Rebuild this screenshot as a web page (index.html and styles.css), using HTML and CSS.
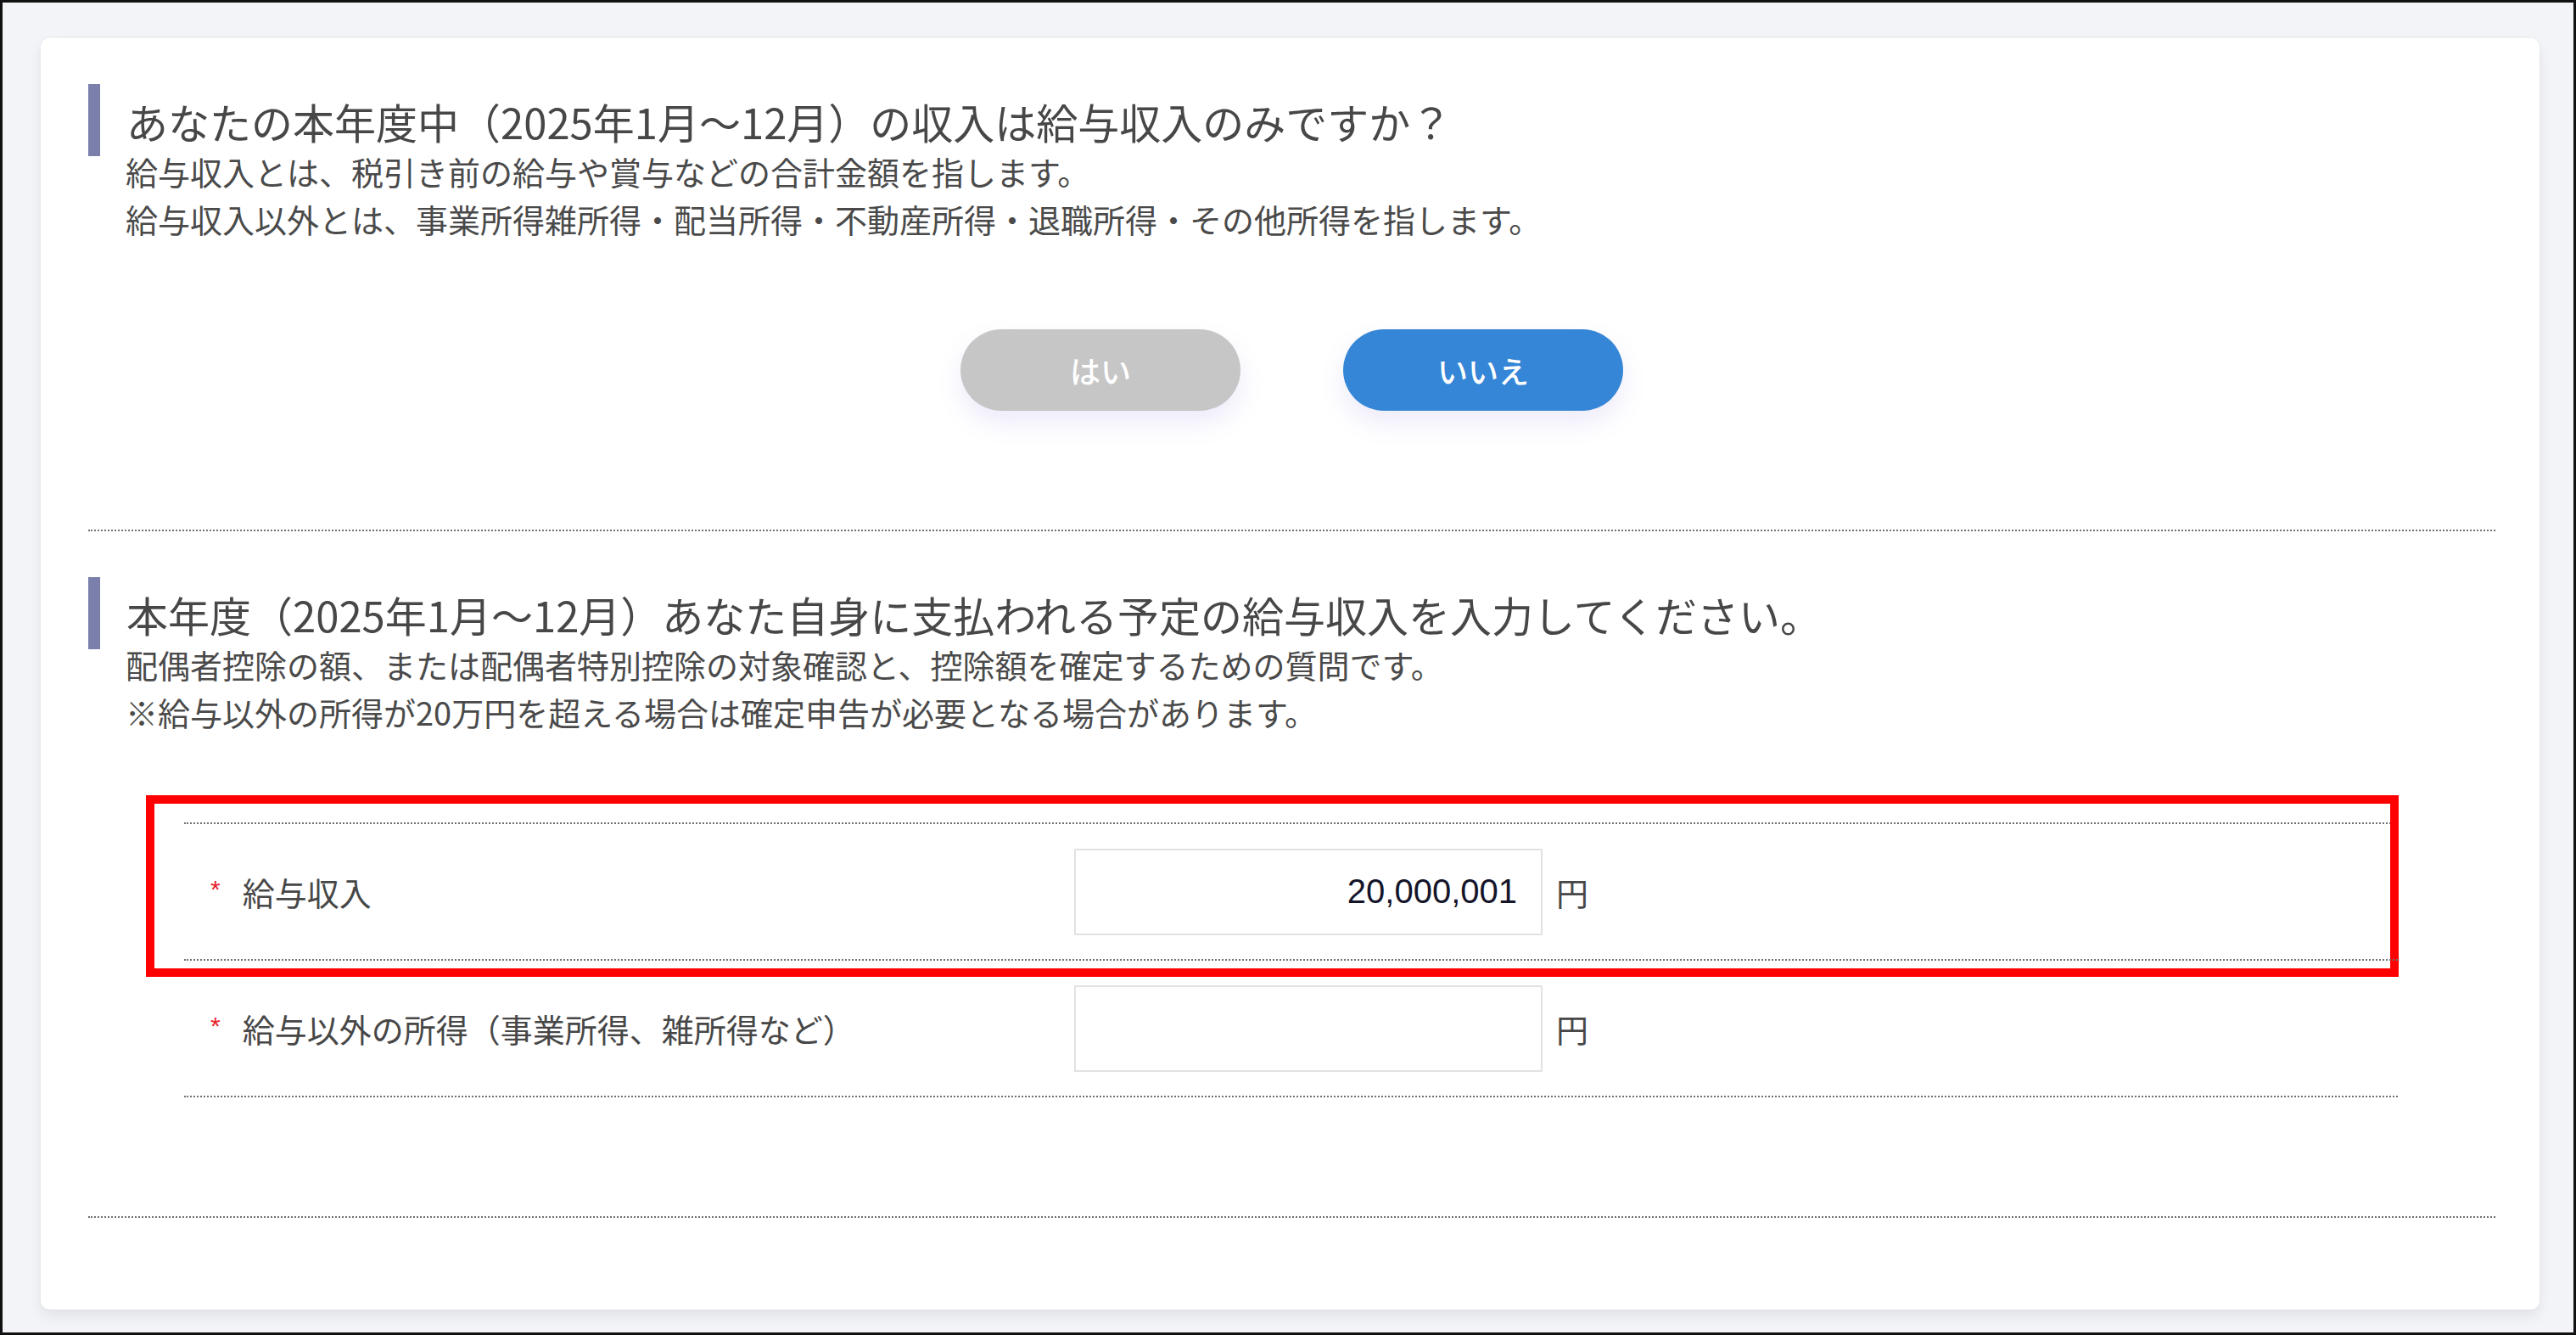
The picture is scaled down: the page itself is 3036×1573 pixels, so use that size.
FILE: index.html
```html
<!DOCTYPE html>
<html lang="ja">
<head>
<meta charset="utf-8">
<title>給与収入の入力</title>
<link rel="stylesheet" href="styles.css">
</head>
<body>
<div class="frame">
  <main class="card">
    <section class="q">
      <h2 class="q-title">あなたの本年度中（2025年1月～12月）の収入は給与収入のみですか？</h2>
      <p class="q-note">給与収入とは、税引き前の給与や賞与などの合計金額を指します。<br>給与収入以外とは、事業所得雑所得・配当所得・不動産所得・退職所得・その他所得を指します。</p>
      <div class="choices">
        <button class="btn btn-yes" type="button">はい</button>
        <button class="btn btn-no" type="button">いいえ</button>
      </div>
    </section>
    <section class="q">
      <h2 class="q-title">本年度（2025年1月～12月）あなた自身に支払われる予定の給与収入を入力してください。</h2>
      <p class="q-note">配偶者控除の額、または配偶者特別控除の対象確認と、控除額を確定するための質問です。<br>※給与以外の所得が20万円を超える場合は確定申告が必要となる場合があります。</p>
      <div class="form-table">
        <div class="row row-marked">
          <label class="label"><span class="req">*</span>給与収入</label>
          <div class="field"><input class="amount" type="text" value="20,000,001"><span class="unit">円</span></div>
        </div>
        <div class="row">
          <label class="label"><span class="req">*</span>給与以外の所得（事業所得、雑所得など）</label>
          <div class="field"><input class="amount" type="text" value=""><span class="unit">円</span></div>
        </div>
      </div>
    </section>
  </main>
</div>
</body>
</html>
```
FILE: styles.css
```css
* { box-sizing: border-box; }
html, body { margin: 0; padding: 0; }
body {
  font-family: "Noto Sans CJK JP", "Noto Sans", sans-serif;
  color: #454545;
}
.frame {
  width: 3036px;
  height: 1573px;
  border: 3px solid #111;
  background: #f3f4f8;
  padding: 42px 40px 0 45px;
  overflow: hidden;
}
.card {
  background: #fff;
  border-radius: 10px;
  box-shadow: 0 8px 16px rgba(0, 0, 0, 0.07), 0 0 4px rgba(0, 0, 0, 0.03);
  padding: 0 52px 108px 56px;
}
.q {
  padding: 54px 0 140px;
  border-bottom: 2px dotted #707070;
}
.q-title {
  margin: 0;
  font-size: 49px;
  font-weight: normal;
  line-height: 56px;
  padding: 16px 0 13px 31px;
  border-left: 14px solid #7a7fac;
  color: #474747;
  white-space: nowrap;
}
.q-note {
  margin: -10px 0 0;
  padding-left: 44px;
  font-size: 38px;
  line-height: 56px;
  color: #4a4a4a;
  white-space: nowrap;
}
.choices {
  margin-top: 102px;
  display: flex;
  justify-content: center;
  gap: 121px;
}
.btn {
  width: 330px;
  height: 96px;
  border: none;
  border-radius: 48px;
  font-family: "Noto Sans CJK JP", sans-serif;
  font-size: 36px;
  font-weight: 500;
  color: #fff;
  box-shadow: 0 14px 30px rgba(110, 90, 210, 0.12);
}
.btn-yes { background: #c6c6c6; }
.btn-no { background: #3586d6; }
.form-table {
  margin: 102px 115px 0 113px;
  border-bottom: 2px dotted #707070;
}
.row {
  position: relative;
  display: grid;
  grid-template-columns: 1049px 1fr;
  align-items: center;
  height: 161px;
  border-top: 2px dotted #707070;
}
.row-marked::after {
  content: "";
  position: absolute;
  top: -34px;
  left: -45px;
  right: -1px;
  bottom: -21px;
  border: 10px solid #ff0000;
  pointer-events: none;
}
.label {
  display: flex;
  align-items: flex-start;
  padding-left: 31px;
  font-size: 38px;
  line-height: 50px;
  color: #474747;
  white-space: nowrap;
}
.req {
  font-family: "Liberation Sans", sans-serif;
  font-size: 30px;
  line-height: 34px;
  margin-top: 5px;
  color: #e8242b;
  margin-right: 26px;
}
.field {
  display: flex;
  align-items: center;
}
.amount {
  width: 552px;
  height: 102px;
  border: 2px solid #e2e2e2;
  border-radius: 0;
  padding: 0 28px 0 20px;
  text-align: right;
  font-family: "Liberation Sans", sans-serif;
  font-size: 40px;
  color: #15152a;
  background: #fff;
  outline: none;
}
.unit {
  margin-left: 16px;
  font-size: 38px;
  color: #474747;
}
```
